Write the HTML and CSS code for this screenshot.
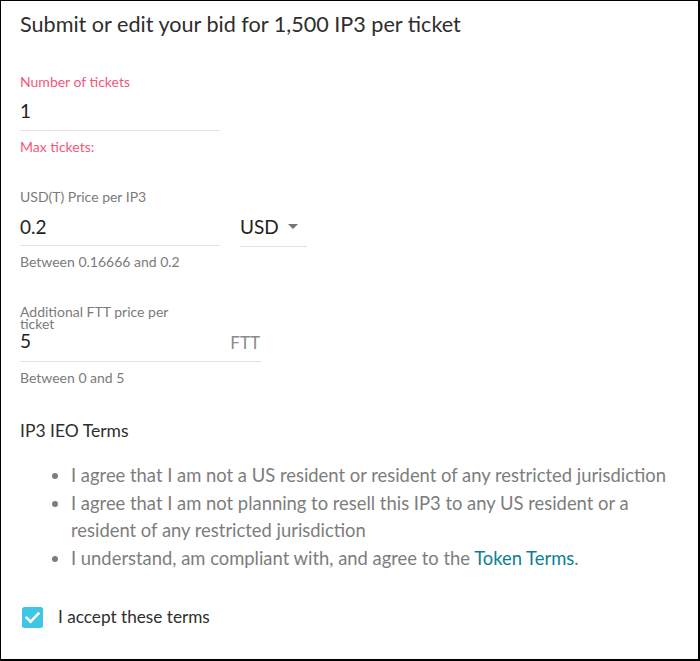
FILE: index.html
```html
<!DOCTYPE html>
<html lang="en">
<head>
<meta charset="utf-8">
<title>Submit bid</title>
<link rel="stylesheet" href="styles.css">
</head>
<body>
<div class="frame">
  <h2 class="title">Submit or edit your bid for 1,500 IP3 per ticket</h2>

  <div class="field field-tickets">
    <div class="label label-error">Number of tickets</div>
    <div class="input input-first"><span class="value">1</span></div>
  </div>
  <div class="error-text">Max tickets:</div>

  <div class="price-row">
    <div class="field field-price">
      <div class="label">USD(T) Price per IP3</div>
      <div class="input input-price"><span class="value">0.2</span></div>
    </div>
    <div class="select">
      <span class="value">USD</span>
      <svg class="arrow" width="10" height="5" viewBox="0 0 10 5"><path d="M0 0 L10 0 L5 5 Z" fill="#757575"/></svg>
    </div>
  </div>
  <div class="helper helper-price">Between 0.16666 and 0.2</div>

  <div class="field field-ftt">
    <div class="label label-wrap">Additional FTT price per ticket</div>
    <div class="input input-ftt"><span class="value">5</span><span class="adorn">FTT</span></div>
  </div>
  <div class="helper">Between 0 and 5</div>

  <h3 class="terms-title">IP3 IEO Terms</h3>
  <ul class="terms">
    <li>I agree that I am not a US resident or resident of any restricted jurisdiction</li>
    <li>I agree that I am not planning to resell this IP3 to any US resident or a resident of any restricted jurisdiction</li>
    <li>I understand, am compliant with, and agree to the <a href="#" class="link">Token Terms</a>.</li>
  </ul>

  <label class="accept">
    <span class="checkbox">
      <svg width="21" height="21" viewBox="0 0 21 21"><rect x="0" y="0" width="21" height="21" rx="2.5" fill="#3ec6e4"/><path d="M4.6 10.8 L8.6 14.6 L16.4 6.6" fill="none" stroke="#fff" stroke-width="2.6" stroke-linecap="square"/></svg>
    </span>
    <span class="accept-text">I accept these terms</span>
  </label>
</div>
</body>
</html>
```

FILE: styles.css
```css
* { box-sizing: border-box; }
html, body { margin: 0; padding: 0; background: #fff; }
body { font-family: Lato, "Open Sans", sans-serif; }

.frame {
  width: 700px;
  height: 661px;
  border-style: solid;
  border-color: #000;
  border-width: 1px 2px 2px 1px;
  padding: 11px 19px 0 19px;
  overflow: hidden;
}

.title {
  margin: 0;
  font-size: 21.6px;
  line-height: 24px;
  font-weight: 400;
  color: #2e2e2e;
}

.field { width: 200px; }
.label {
  font-size: 14px;
  line-height: 15px;
  color: #7b7b7b;
}
.label-error {
  line-height: 16px;
  color: #f4577c;
}
.field-tickets { margin-top: 38px; }

.input {
  display: flex;
  align-items: baseline;
  border-bottom: 1px solid #e2e2e2;
  font-size: 19px;
  line-height: 24px;
  color: #222;
}
.input-first { padding: 9px 0 7px; }
.error-text {
  margin-top: 8px;
  font-size: 14px;
  line-height: 16px;
  color: #f4577c;
}

.price-row {
  display: flex;
  align-items: flex-end;
  gap: 20px;
  margin-top: 34px;
}
.input-price { padding: 11px 0 6px; }
.select {
  width: 67px;
  display: flex;
  align-items: center;
  justify-content: space-between;
  padding: 11px 9px 7px 0;
  margin-bottom: -1px;
  border-bottom: 1px solid #e2e2e2;
  font-size: 19px;
  line-height: 24px;
  color: #222;
}
.arrow { display: block; margin-top: -1px; }

.helper {
  margin-top: 8px;
  font-size: 14px;
  line-height: 15px;
  color: #7b7b7b;
}

.field-ftt { width: 241px; margin-top: 37px; }
.label-wrap { width: 160px; line-height: 12px; }
.input-ftt { line-height: 20px; padding: 0 1px 9px 0; margin-top: 1px; }
.input-ftt .value { flex: 1; }
.adorn {
  font-size: 17px;
  color: #8a8a8a;
  position: relative;
  top: 1px;
}

.terms-title {
  margin: 36px 0 0;
  font-size: 17.5px;
  line-height: 20px;
  font-weight: 400;
  color: #2e2e2e;
}
.terms {
  margin: 21px 0 0;
  padding-left: 51px;
  font-size: 18.4px;
  line-height: 27.7px;
  color: #7d7d7d;
}
.link { color: #0d7e96; text-decoration: none; }

.accept {
  display: flex;
  align-items: center;
  gap: 15px;
  margin-top: 34px;
  margin-left: 2px;
}
.checkbox { display: block; width: 21px; height: 21px; }
.checkbox svg { display: block; }
.accept-text {
  font-size: 17.2px;
  line-height: 20px;
  color: #2e2e2e;
}
```
